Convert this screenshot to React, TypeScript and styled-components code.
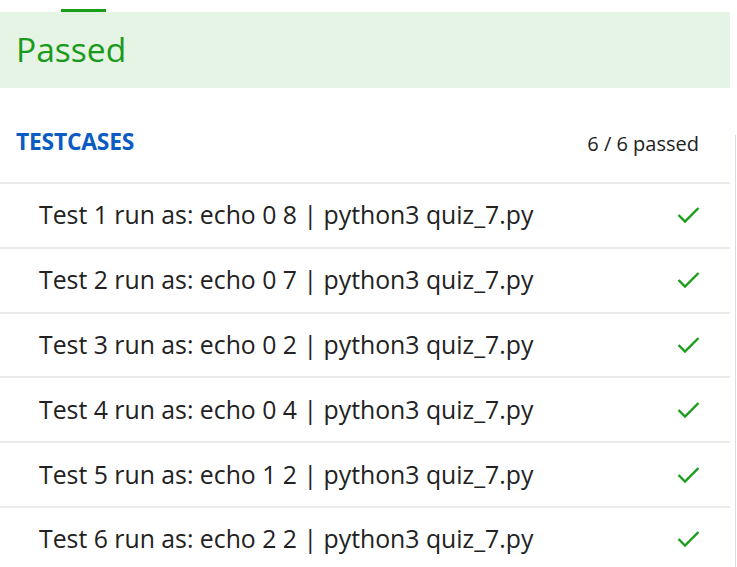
import React from "react";
import styled, { createGlobalStyle } from "styled-components";

const Global = createGlobalStyle`
  html, body { margin: 0; padding: 0; background: #ffffff; }
  body { font-family: "Open Sans", "Noto Sans", sans-serif; color: #222; }
`;

const Page = styled.div`
  width: 737px;
  height: 567px;
  overflow: hidden;
  display: flex;
  flex-direction: column;
  & > * { flex-shrink: 0; }
`;

const TabStrip = styled.div`
  height: 12px;
  display: flex;
  align-items: flex-start;
  padding-left: 61px;
  padding-top: 9px;
  box-sizing: border-box;
`;

const TabIndicator = styled.div`
  width: 45px;
  height: 3px;
  background: #1a9e1a;
`;

const Banner = styled.div`
  width: 730px;
  height: 76px;
  background: #e6f4e6;
  display: flex;
  align-items: center;
  padding-left: 16px;
  box-sizing: border-box;
`;

const BannerTitle = styled.h1`
  margin: 0;
  font-size: 33.6px;
  font-weight: 500;
  color: #1a9a1a;
  line-height: 1;
`;

const Body = styled.div`
  flex: 1 0 auto;
  display: flex;
`;

const Main = styled.div`
  width: 730px;
  display: flex;
  flex-direction: column;
  & > * { flex-shrink: 0; }
`;

const SideRule = styled.div`
  width: 1px;
  margin-left: 5px;
  margin-top: 47px;
  background: #dcd8e4;
`;

const Header = styled.div`
  height: 94px;
  display: flex;
  align-items: center;
  justify-content: space-between;
  padding: 13px 31px 0 16px;
  box-sizing: border-box;
`;

const SectionTitle = styled.h2`
  margin: 0;
  font-size: 22.8px;
  font-weight: 700;
  color: #0a5bc4;
  letter-spacing: -0.2px;
`;

const Summary = styled.span`
  font-size: 20px;
  color: #222;
  margin-top: 3px;
`;

const Row = styled.div`
  height: 64.8px;
  border-top: 2px solid #ebebeb;
  display: flex;
  align-items: center;
  justify-content: space-between;
  padding: 0 30px 0 39px;
  box-sizing: border-box;
`;

const RowLabel = styled.span`
  font-size: 24.8px;
  color: #222;
  margin-top: -2px;
`;

const Check = () => (
  <svg width="23" height="18" viewBox="0 0 23 18">
    <polyline points="1.5,9 8,15.5 21.5,2" fill="none" stroke="#1a9e1a" strokeWidth="2.4" />
  </svg>
);

const tests = [
  ["1", "0 8"],
  ["2", "0 7"],
  ["3", "0 2"],
  ["4", "0 4"],
  ["5", "1 2"],
  ["6", "2 2"],
];

export default function App() {
  return (
    <Page>
      <Global />
      <TabStrip>
        <TabIndicator />
      </TabStrip>
      <Banner>
        <BannerTitle>Passed</BannerTitle>
      </Banner>
      <Body>
        <Main>
          <Header>
            <SectionTitle>TESTCASES</SectionTitle>
            <Summary>6 / 6 passed</Summary>
          </Header>
          {tests.map(([n, args]) => (
            <Row key={n}>
              <RowLabel>Test {n} run as: echo {args} | python3 quiz_7.py</RowLabel>
              <Check />
            </Row>
          ))}
        </Main>
        <SideRule />
      </Body>
    </Page>
  );
}
